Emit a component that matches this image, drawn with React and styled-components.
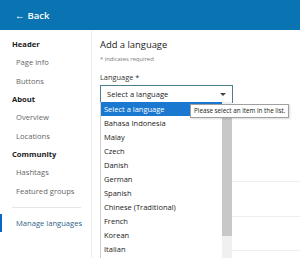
import styled, { createGlobalStyle } from "styled-components";

const GlobalStyle = createGlobalStyle`
  html, body {
    margin: 0;
    padding: 0;
    background: #ffffff;
    font-family: "Open Sans", "Noto Sans", sans-serif;
    color: #333333;
  }
`;

const Page = styled.div`
  width: 300px;
  height: 258px;
  overflow: hidden;
  display: flex;
  flex-direction: column;
`;

const TopBar = styled.div`
  height: 30px;
  flex-shrink: 0;
  background: #0a73b1;
  display: flex;
  align-items: center;
  padding-left: 15px;
  color: #ffffff;
  font-size: 9.5px;
  font-weight: 600;
  gap: 3px;
`;

const Body = styled.div`
  flex: 1;
  display: flex;
`;

const Sidebar = styled.nav`
  width: 91px;
  flex-shrink: 0;
  border-right: 1px solid #ececec;
  padding-top: 5px;
  display: flex;
  flex-direction: column;
`;

const SideItem = styled.div`
  height: 18.3px;
  display: flex;
  align-items: center;
  padding-left: ${(p) => (p.$head ? 12 : 16)}px;
  font-size: 7.6px;
  font-weight: ${(p) => (p.$head ? 700 : 400)};
  color: ${(p) => (p.$head ? "#222222" : "#666666")};
`;

const SideRule = styled.div`
  height: 1px;
  background: #e6e6e6;
  margin: 7px 10px 6px 12px;
`;

const ActiveItem = styled.div`
  height: 18px;
  display: flex;
  align-items: center;
  padding-left: 14px;
  font-size: 7.6px;
  color: #2f5f86;
  border-left: 2px solid #0a66c2;
`;

const Main = styled.main`
  flex: 1;
  position: relative;
  padding: 7px 0 0 8px;
`;

const Title = styled.div`
  font-size: 9.4px;
  color: #222222;
  height: 16px;
  line-height: 16px;
`;

const Note = styled.div`
  font-size: 5.8px;
  color: #777777;
  margin-top: 1px;
  height: 10px;
  line-height: 10px;
`;

const Label = styled.div`
  font-size: 7.4px;
  color: #333333;
  margin-top: 7px;
  height: 12px;
  line-height: 12px;
`;

const Select = styled.div`
  margin-top: 2px;
  width: 119px;
  height: 16px;
  border: 1px solid #4d7f8f;
  display: flex;
  align-items: center;
  justify-content: space-between;
  padding: 0 6px;
  font-size: 7.6px;
  color: #222222;
`;

const Caret = styled.span`
  width: 0;
  height: 0;
  border-left: 3px solid transparent;
  border-right: 3px solid transparent;
  border-top: 3px solid #444444;
`;

const BackRows = styled.div`
  position: absolute;
  left: 140px;
  right: 0;
  top: 0;
`;

const BackRule = styled.div`
  position: absolute;
  left: 0;
  right: 0;
  top: ${(p) => p.$y}px;
  height: 1px;
  background: #eeeeee;
`;

const Dropdown = styled.div`
  position: absolute;
  left: 8px;
  top: 72px;
  width: 131px;
  height: 156px;
  overflow: hidden;
  background: #ffffff;
  border-left: 1px solid #d0d0d0;
  display: flex;
`;

const Options = styled.div`
  flex: 1;
`;

const Option = styled.div`
  height: 14px;
  display: flex;
  align-items: center;
  padding-left: 3px;
  font-size: 7.5px;
  color: ${(p) => (p.$selected ? "#ffffff" : "#222222")};
  background: ${(p) => (p.$selected ? "#1a78d0" : "transparent")};
`;

const Scrollbar = styled.div`
  width: 10px;
  background: #f0f0f0;
  display: flex;
  flex-direction: column;
`;

const Thumb = styled.div`
  margin-top: 14px;
  height: 120px;
  background: #c8c8c8;
`;

const Tooltip = styled.div`
  position: absolute;
  left: 98px;
  top: 74px;
  padding: 0 3px;
  height: 12px;
  line-height: 12px;
  background: #ffffff;
  border: 1px solid #a0a0a0;
  font-size: 6.3px;
  color: #222222;
  white-space: nowrap;
  box-shadow: 1px 1px 2px rgba(0, 0, 0, 0.15);
`;

const languages = [
  "Select a language",
  "Bahasa Indonesia",
  "Malay",
  "Czech",
  "Danish",
  "German",
  "Spanish",
  "Chinese (Traditional)",
  "French",
  "Korean",
  "Italian",
];

export default function App() {
  return (
    <Page>
      <GlobalStyle />
      <TopBar>
        <span>←</span>
        <span>Back</span>
      </TopBar>
      <Body>
        <Sidebar>
          <SideItem $head>Header</SideItem>
          <SideItem>Page info</SideItem>
          <SideItem>Buttons</SideItem>
          <SideItem $head>About</SideItem>
          <SideItem>Overview</SideItem>
          <SideItem>Locations</SideItem>
          <SideItem $head>Community</SideItem>
          <SideItem>Hashtags</SideItem>
          <SideItem>Featured groups</SideItem>
          <SideRule />
          <ActiveItem>Manage languages</ActiveItem>
        </Sidebar>
        <Main>
          <Title>Add a language</Title>
          <Note>* indicates required</Note>
          <Label>Language *</Label>
          <Select>
            <span>Select a language</span>
            <Caret />
          </Select>
          <BackRows>
            <BackRule $y={151} />
            <BackRule $y={186} />
            <BackRule $y={220} />
          </BackRows>
          <Dropdown>
            <Options>
              {languages.map((l, i) => (
                <Option key={l} $selected={i === 0}>
                  {l}
                </Option>
              ))}
            </Options>
            <Scrollbar>
              <Thumb />
            </Scrollbar>
          </Dropdown>
          <Tooltip>Please select an item in the list.</Tooltip>
        </Main>
      </Body>
    </Page>
  );
}
